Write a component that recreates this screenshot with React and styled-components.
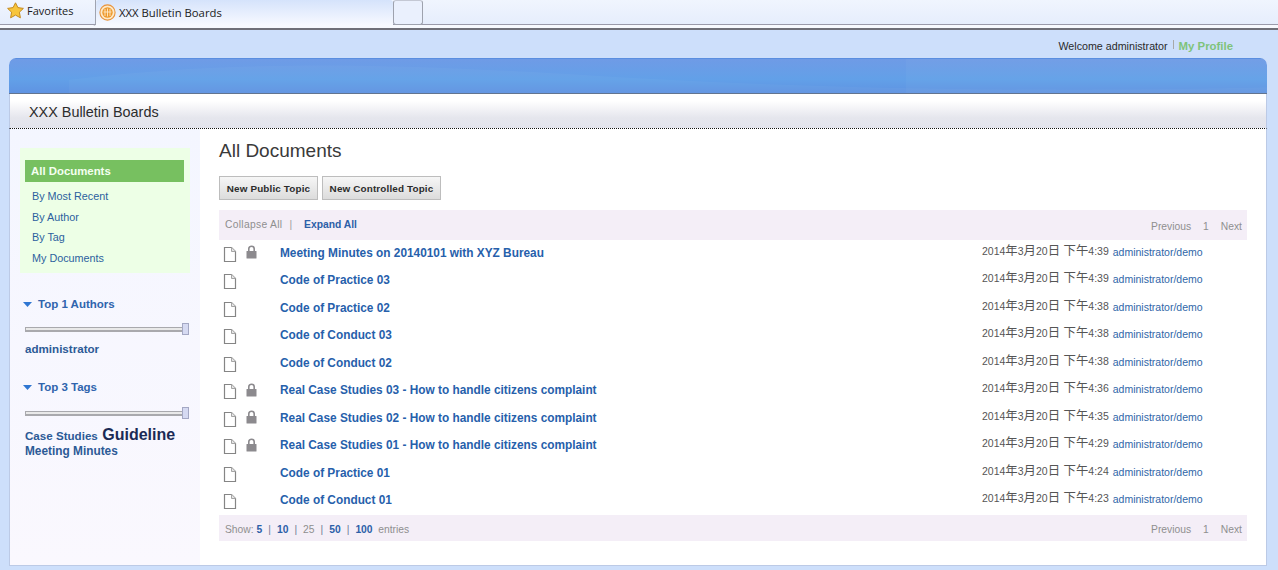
import React from "react";
import styled, { createGlobalStyle } from "styled-components";

const FONT = `"Liberation Sans", Arial, "Noto Sans CJK SC", sans-serif`;

const docs = [
  { title: "Meeting Minutes on 20140101 with XYZ Bureau", time: "4:39", locked: true },
  { title: "Code of Practice 03", time: "4:39" },
  { title: "Code of Practice 02", time: "4:38" },
  { title: "Code of Conduct 03", time: "4:38" },
  { title: "Code of Conduct 02", time: "4:38" },
  { title: "Real Case Studies 03 - How to handle citizens complaint", time: "4:36", locked: true },
  { title: "Real Case Studies 02 - How to handle citizens complaint", time: "4:35", locked: true },
  { title: "Real Case Studies 01 - How to handle citizens complaint", time: "4:29", locked: true },
  { title: "Code of Practice 01", time: "4:24" },
  { title: "Code of Conduct 01", time: "4:23" },
];

const GlobalStyle = createGlobalStyle`
  html, body {
    margin: 0;
    padding: 0;
    height: 570px;
    overflow: hidden;
    background: #cddffb;
    font-family: ${FONT};
  }
  * { box-sizing: border-box; }
`;

const StarIcon = () => (
  <svg width="17" height="17" viewBox="0 0 17 17">
    <path
      d="M8.5 0.8 L10.9 5.6 L16.4 6.4 L12.4 10.2 L13.4 15.8 L8.5 13.1 L3.6 15.8 L4.6 10.2 L0.6 6.4 L6.1 5.6 Z"
      fill="#f7c53c"
      stroke="#c48a1e"
      strokeWidth="1"
      strokeLinejoin="round"
    />
  </svg>
);

const SiteIcon = () => (
  <svg width="17" height="17" viewBox="0 0 17 17">
    <circle cx="8.5" cy="8.5" r="7.6" fill="#fde9c8" stroke="#e8933a" strokeWidth="1.1" />
    <circle cx="8.5" cy="8.5" r="5.2" fill="#ee9a2e" />
    <path d="M6 5v7M8.5 4.5v8M11 5v7M4.5 8h8" stroke="#fde9c8" strokeWidth="0.9" />
  </svg>
);

const PageIcon = () => (
  <svg width="14" height="17" viewBox="0 0 14 17">
    <path d="M1.5 1.5 H8.5 L12.5 5.5 V15.5 H1.5 Z" fill="#fff" stroke="#858585" strokeWidth="1.2" />
    <path d="M8.5 1.5 V5.5 H12.5" fill="#e4e4e4" stroke="#a5a5a5" strokeWidth="1" />
  </svg>
);

const LockIcon = () => (
  <svg width="11" height="14" viewBox="0 0 11 14">
    <path d="M2.8 6.5 V3.8 C2.8 0.4 8.2 0.4 8.2 3.8 V6.5" fill="none" stroke="#8c8a8e" strokeWidth="1.6" />
    <rect x="0.5" y="6" width="10" height="7.5" rx="0.5" fill="#8c8a8e" />
  </svg>
);

const Caret = () => (
  <svg width="9" height="5" viewBox="0 0 9 5">
    <path d="M0 0 H9 L4.5 5 Z" fill="#2f76d2" />
  </svg>
);

const Tabs = styled.div`
  height: 30px;
  display: flex;
  background: linear-gradient(#f0f5fe, #e4ecfc);
  border-bottom: 2px solid #6f6f78;
  box-shadow: inset 0 -3px 0 #f7f9fe, inset 0 -4px 0 #9a9aaa;
`;

const FavTab = styled.div`
  width: 96px;
  height: 26px;
  display: flex;
  align-items: center;
  gap: 3px;
  padding: 0 0 5px 7px;
  font-family: "Open Sans", ${FONT};
  font-size: 11px;
  color: #1a1a1a;
  border-right: 1px solid #a0a4b0;
  border-bottom-right-radius: 3px;
`;

const ActiveTab = styled.div`
  width: 297px;
  height: 26px;
  display: flex;
  align-items: center;
  gap: 3px;
  padding: 0 0 1px 3px;
  font-family: "Open Sans", ${FONT};
  font-size: 11.3px;
  color: #1a1a1a;
  border-radius: 3px 3px 0 0;
  background: linear-gradient(#d5e3fb, #eef3fe 70%, #f8faff);
`;

const NewTab = styled.div`
  width: 30px;
  height: 25px;
  border: 1px solid #9ea2ae;
  border-top-color: #c4c8d4;
  border-radius: 3px;
  background: #eaf0fd;
`;

const UserBar = styled.div`
  height: 28px;
  padding: 4px 45px 0 0;
  display: flex;
  justify-content: flex-end;
  align-items: center;
  font-size: 10.7px;
  color: #2a2a2a;
`;

const UserDivider = styled.span`
  width: 1px;
  height: 9px;
  margin: -4px 5px 0 5px;
  background: #a8a8a8;
`;

const ProfileLink = styled.span`
  font-weight: bold;
  font-size: 11.4px;
  color: #7fc37a;
`;

const Panel = styled.div`
  margin: 0 11px 0 9px;
  height: 508px;
  background: #fff;
  border-radius: 7px 7px 0 0;
  overflow: hidden;
`;

const Banner = styled.div`
  position: relative;
  height: 36px;
  background: linear-gradient(#6f9be6, #62a0e8 60%, #5f93e2);
  border-top: 1px solid #5a8ee0;
  border-bottom: 1px solid #62748f;
  overflow: hidden;
`;

const BannerSwoosh = styled.svg`
  position: absolute;
  inset: 0;
  width: 100%;
  height: 100%;
`;

const TitleBar = styled.div`
  height: 35px;
  padding: 1px 0 0 19px;
  display: flex;
  align-items: center;
  font-size: 14.4px;
  color: #2c2c2c;
  background: linear-gradient(#fff 20%, #e5e6ed 70%, #e3e4ec);
  border-left: 1px solid #bccae6;
  border-right: 1px solid #bccae6;
  border-bottom: 1px dotted #111;
`;

const Body = styled.div`
  display: flex;
  height: 437px;
  border: 1px solid #bccae6;
  border-top: 0;
`;

const Sidebar = styled.aside`
  width: 190px;
  flex: none;
  padding: 19px 10px 0 10px;
  background: linear-gradient(#f4f6ff, #faf8fe);
`;

const NavBox = styled.nav`
  height: 125px;
  padding: 12px 6px 0 5px;
  background: #edffe6;
`;

const NavHeader = styled.div`
  height: 22px;
  padding-left: 6px;
  display: flex;
  align-items: center;
  background: #77c060;
  color: #f4fff0;
  font-size: 11.4px;
  font-weight: bold;
`;

const NavList = styled.div`
  padding: 4px 0 0 7px;
`;

const NavLink = styled.div`
  height: 20.5px;
  display: flex;
  align-items: center;
  font-size: 10.8px;
  color: #2c5f9e;
`;

const FilterTitle = styled.div`
  height: 14px;
  margin-top: ${(p) => p.$top}px;
  padding-left: 3px;
  display: flex;
  align-items: center;
  gap: 6px;
  font-size: 11.5px;
  font-weight: bold;
  color: #2f64ad;
`;

const Slider = styled.div`
  position: relative;
  height: 5px;
  margin: ${(p) => p.$top}px 2px 0 5px;
  width: 161px;
  background: #e9e9e9;
  border: 1px solid #a9a9ad;
  border-bottom-width: 2px;
`;

const SliderThumb = styled.span`
  position: absolute;
  right: -4px;
  top: -5px;
  width: 7px;
  height: 12px;
  background: #d6daf2;
  border: 1px solid #a4a8c4;
`;

const AuthorLink = styled.div`
  margin: 10px 0 0 5px;
  font-size: 11.6px;
  font-weight: bold;
  color: #2c5a96;
`;

const TagCloud = styled.div`
  margin: 12px 0 0 5px;
  width: 165px;
  line-height: 14px;
  font-weight: bold;
  color: #2c5a96;
`;

const Tag = styled.span`
  font-size: ${(p) => p.$size}px;
  color: ${(p) => p.$color || "#2c5a96"};
`;

const Main = styled.main`
  flex: 1;
  min-width: 0;
  padding: 10px 19px 0 19px;
`;

const Heading = styled.h2`
  margin: 0;
  height: 26px;
  font-size: 19px;
  font-weight: normal;
  line-height: 24px;
  color: #3a3a3a;
`;

const ButtonRow = styled.div`
  display: flex;
  gap: 4px;
  margin-top: 11px;
`;

const Button = styled.button`
  width: ${(p) => p.$width}px;
  height: 24px;
  padding: 0;
  font-family: ${FONT};
  font-size: 9.9px;
  font-weight: bold;
  letter-spacing: 0.15px;
  color: #2c2c2c;
  border: 1px solid #bdbdbd;
  background: linear-gradient(#f6f6f6, #dcdcdc);
`;

const Strip = styled.div`
  height: ${(p) => p.$height}px;
  margin-top: ${(p) => p.$top}px;
  padding: 0 5px 0 6px;
  display: flex;
  justify-content: space-between;
  align-items: ${(p) => p.$align || "center"};
  background: #f4eef7;
  font-size: 10.3px;
  color: #8f8f8f;
`;

const StripGroup = styled.div`
  display: flex;
  align-items: center;
  gap: ${(p) => p.$gap || 0}px;
  padding: ${(p) => p.$pad || "0"};
`;

const BoldLink = styled.span`
  font-weight: bold;
  color: #2c5fa8;
`;

const CollapseLink = styled.span`
  letter-spacing: 0.3px;
`;

const Sep = styled.span`
  margin: ${(p) => p.$margin || "0 6px"};
  color: ${(p) => p.$color || "#6c7b95"};
`;

const Rows = styled.div`
  display: flex;
  flex-direction: column;
  height: 275px;
`;

const Row = styled.div`
  flex: 1;
  display: flex;
  align-items: center;
  padding-left: 4px;
`;

const IconCell = styled.div`
  width: 23px;
  display: flex;
  padding-top: 1px;
`;

const LockCell = styled.div`
  width: 34px;
  display: flex;
  margin-top: -3px;
`;

const DocTitle = styled.div`
  width: 702px;
  margin-top: -2px;
  font-size: 11.85px;
  font-weight: bold;
  color: #2660ab;
`;

const DocMeta = styled.div`
  margin-top: -8px;
  white-space: nowrap;
  font-size: 10.5px;
  color: #555;
`;

const Cjk = styled.span`
  font-size: 12.4px;
`;

const DocAuthor = styled.span`
  margin-left: 4px;
  font-size: 10.5px;
  vertical-align: -1px;
  color: #2f66a8;
`;

const Pager = () => (
  <StripGroup $gap={12}>
    <span>Previous</span>
    <span>1</span>
    <span>Next</span>
  </StripGroup>
);

export default function App() {
  return (
    <>
      <GlobalStyle />
      <Tabs>
        <FavTab>
          <StarIcon />
          <span>Favorites</span>
        </FavTab>
        <ActiveTab>
          <SiteIcon />
          <span>XXX Bulletin Boards</span>
        </ActiveTab>
        <NewTab />
      </Tabs>
      <UserBar>
        <span>Welcome administrator</span>
        <UserDivider />
        <ProfileLink>My Profile</ProfileLink>
      </UserBar>
      <Panel>
        <Banner>
          <BannerSwoosh viewBox="0 0 1258 36" preserveAspectRatio="none">
            <path d="M60 22 C200 4 340 2 560 16 C760 30 1000 36 1258 30 V36 H60 Z" fill="#ffffff" opacity="0.03" />
            <path d="M0 0 H897 V36 H1258 V0 Z" fill="#ffffff" opacity="0.03" />
          </BannerSwoosh>
        </Banner>
        <TitleBar>XXX Bulletin Boards</TitleBar>
        <Body>
          <Sidebar>
            <NavBox>
              <NavHeader>All Documents</NavHeader>
              <NavList>
                <NavLink>By Most Recent</NavLink>
                <NavLink>By Author</NavLink>
                <NavLink>By Tag</NavLink>
                <NavLink>My Documents</NavLink>
              </NavList>
            </NavBox>
            <FilterTitle $top={24}>
              <Caret />
              <span>Top 1 Authors</span>
            </FilterTitle>
            <Slider $top={16}>
              <SliderThumb />
            </Slider>
            <AuthorLink>administrator</AuthorLink>
            <FilterTitle $top={25}>
              <Caret />
              <span>Top 3 Tags</span>
            </FilterTitle>
            <Slider $top={17}>
              <SliderThumb />
            </Slider>
            <TagCloud>
              <Tag $size={11.6}>Case Studies</Tag> <Tag $size={16} $color="#1b2a55">Guideline</Tag>{" "}
              <Tag $size={11.85}>Meeting Minutes</Tag>
            </TagCloud>
          </Sidebar>
          <Main>
            <Heading>All Documents</Heading>
            <ButtonRow>
              <Button $width={99}>New Public Topic</Button>
              <Button $width={119}>New Controlled Topic</Button>
            </ButtonRow>
            <Strip $height={30} $top={10} $align="flex-start">
              <StripGroup $pad="9px 0 0 0">
                <CollapseLink>Collapse All</CollapseLink>
                <Sep $color="#a0a0a0" $margin="0 12px 0 7px">|</Sep>
                <BoldLink>Expand All</BoldLink>
              </StripGroup>
              <StripGroup $pad="11px 0 0 0">
                <Pager />
              </StripGroup>
            </Strip>
            <Rows>
              {docs.map((doc) => (
                <Row key={doc.title}>
                  <IconCell>
                    <PageIcon />
                  </IconCell>
                  <LockCell>{doc.locked && <LockIcon />}</LockCell>
                  <DocTitle>{doc.title}</DocTitle>
                  <DocMeta>
                    2014<Cjk>年</Cjk>3<Cjk>月</Cjk>20<Cjk>日 下午</Cjk>
                    {doc.time}
                    <DocAuthor>administrator/demo</DocAuthor>
                  </DocMeta>
                </Row>
              ))}
            </Rows>
            <Strip $height={26} $top={0}>
              <StripGroup $pad="2px 0 0 0">
                <span>Show:&nbsp;</span>
                <BoldLink>5</BoldLink>
                <Sep>|</Sep>
                <BoldLink>10</BoldLink>
                <Sep>|</Sep>
                <span>25</span>
                <Sep>|</Sep>
                <BoldLink>50</BoldLink>
                <Sep>|</Sep>
                <BoldLink>100</BoldLink>
                <span>&nbsp;&nbsp;entries</span>
              </StripGroup>
              <StripGroup $pad="2px 0 0 0">
                <Pager />
              </StripGroup>
            </Strip>
          </Main>
        </Body>
      </Panel>
    </>
  );
}
